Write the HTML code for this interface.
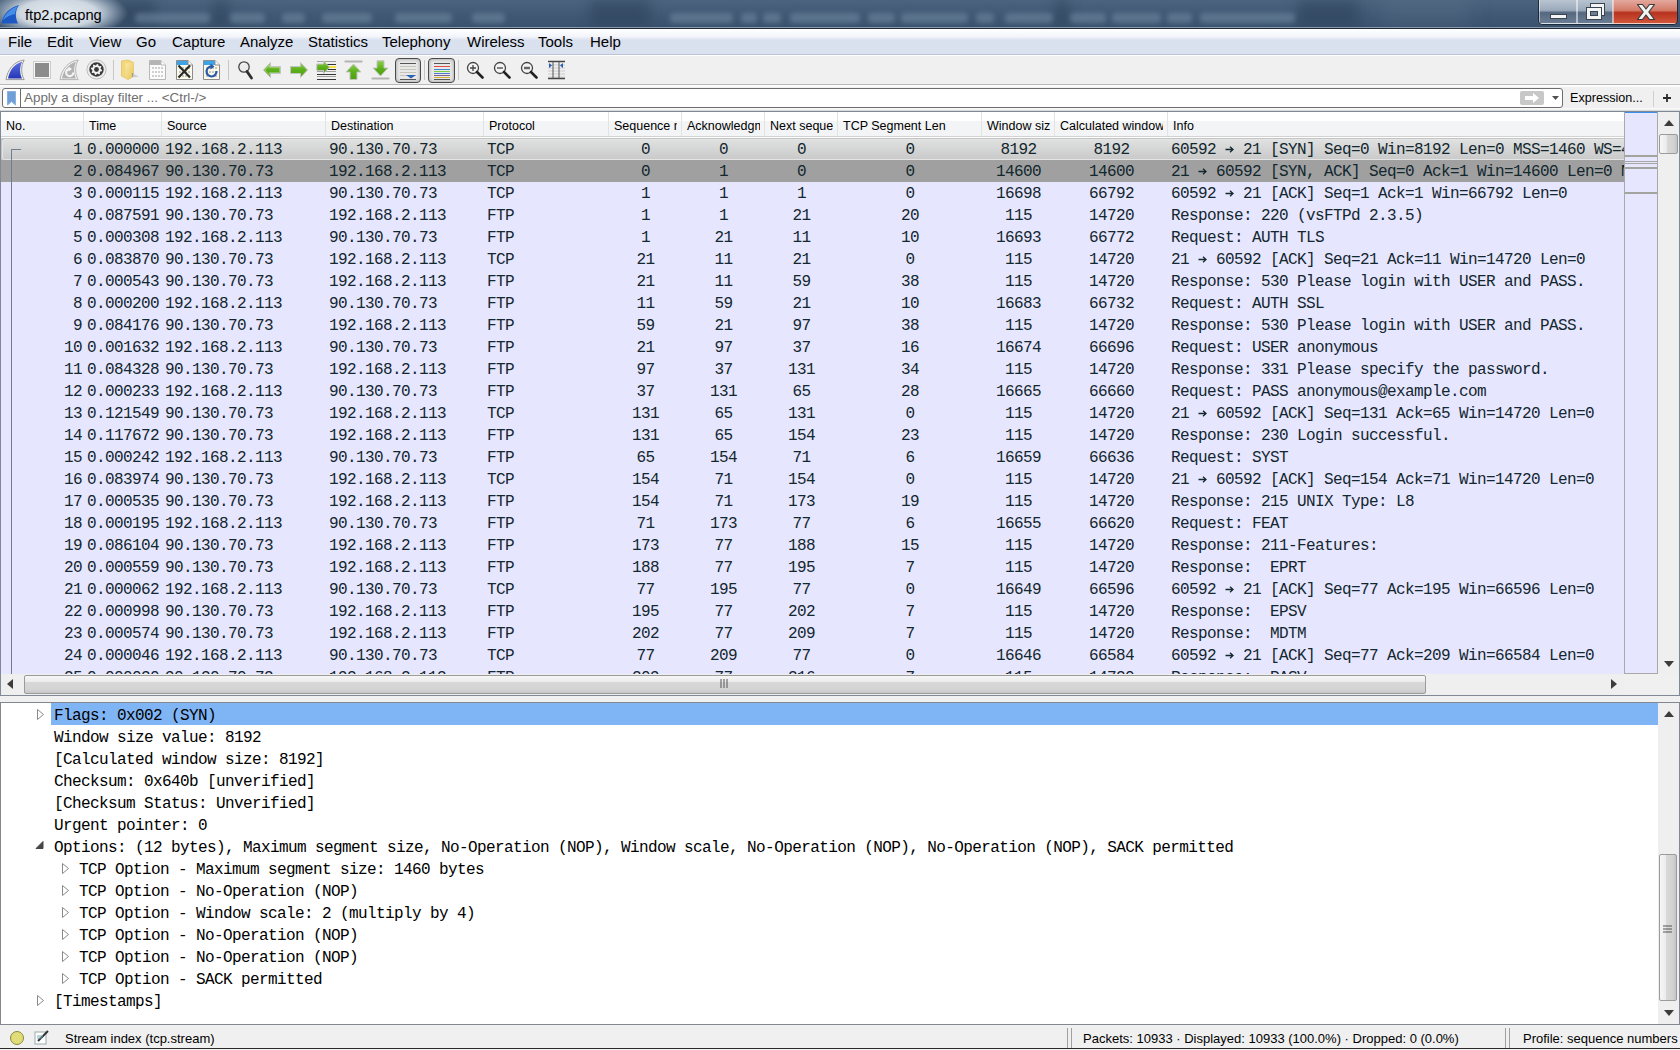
<!DOCTYPE html>
<html><head><meta charset="utf-8">
<style>
*{margin:0;padding:0;box-sizing:border-box}
html,body{width:1680px;height:1050px;overflow:hidden;background:#f0f0f0;font-family:"Liberation Sans",sans-serif;color:#000}
.abs{position:absolute}
#title{position:absolute;left:0;top:0;width:1680px;height:28px;background:linear-gradient(#4b637d 0%,#425a75 45%,#3a516c 100%);overflow:hidden}
#title::after{content:"";position:absolute;left:0;top:27px;width:1680px;height:1px;background:#8a9bb0}
#title .glow{position:absolute;left:-12px;top:-12px;width:140px;height:50px;background:radial-gradient(closest-side,rgba(232,237,242,0.97) 0%,rgba(218,226,234,0.92) 55%,rgba(170,186,202,0.5) 82%,rgba(120,140,160,0) 100%)}
#title .blur{position:absolute;top:13px;height:10px;background:rgba(120,145,170,0.5);filter:blur(2.5px);border-radius:4px}
#title .dark{position:absolute;top:0px;height:26px;background:rgba(40,60,85,0.45);filter:blur(6px)}
#title .ttl{position:absolute;left:25px;top:7px;font-size:14.7px;color:#000}
#titleline{position:absolute;left:0;top:28px;width:1680px;height:1px;background:#1f2a36}
#menubar{position:absolute;left:0;top:29px;width:1680px;height:26px;background:linear-gradient(#ffffff 0%,#f3f5fa 30%,#d9e0ee 45%,#dbe2ef 100%);border-bottom:1px solid #b9c3d5}
.mi{position:absolute;top:4px;font-size:15px;color:#000}
#toolbar{position:absolute;left:0;top:55px;width:1680px;height:30px;background:#f0f0f0;border-top:1px solid #fff;border-bottom:1px solid #b9b9b9}
#tbw{position:absolute;left:0;top:85px;width:1680px;height:2px;background:#fbfbfb}
#fbw{position:absolute;left:0;top:108px;width:1680px;height:3px;background:linear-gradient(#fafafa,#f4f4f4 50%,#c9ccd0)}
.tsep{position:absolute;top:60px;width:1px;height:20px;background:#c6c6c6}
#filterbox{position:absolute;left:2px;top:88px;width:1561px;height:20px;background:#fff;border:1px solid #6d6d6d;border-radius:3px}
#filterbox .bm{position:absolute;left:17px;top:-1px;width:1px;height:20px;background:#6d6d6d}
#filterbox .ph{position:absolute;left:21px;top:1px;font-size:13.4px;color:#6e6e6e}
#expr{position:absolute;left:1570px;top:91px;font-size:12.6px}
#plist{position:absolute;left:0;top:111px;width:1680px;height:585px;border:1px solid #7f8a96;background:#e7e6ff;overflow:hidden}
#hdr{position:absolute;left:0;top:111px;width:1624px;height:27px;background:linear-gradient(#ffffff 0%,#ffffff 40%,#f3f4f6 41%,#f3f4f6 100%);border-bottom:1px solid #d5d5d5}
.hc{position:absolute;top:0;height:24px;border-left:1px solid #e3e3e3;white-space:nowrap}
.hc div{position:absolute;left:0;top:0;bottom:0;right:4px;overflow:hidden}
.hc span{position:absolute;left:5px;top:7px;font-size:12.5px}
.hc:first-child{border-left:none}
.row{position:absolute;left:1px;width:1623px;height:22px;background:#e7e6ff}
.row.syn{background:#a0a0a0}
.row.sel{background:#c4c4c4}
.row.sel::before{content:"";position:absolute;left:1px;top:1px;right:0;bottom:0;border:1px solid #e4e4e4;border-right:none;border-radius:3px 0 0 3px;background:linear-gradient(#dfe0e0,#cacaca)}
.arw{display:inline-block;width:9px;height:22px;position:relative;vertical-align:top}
.arw svg{position:absolute;left:0;top:7px}
.cell{position:absolute;top:1px;height:22px;line-height:22px;font-family:"Liberation Mono",monospace;font-size:16px;letter-spacing:-0.6px;color:#12272e;white-space:pre;overflow:hidden;padding:0 3px}
.cell.ar{text-align:right;padding-right:2px}
.cell.ac{text-align:center;padding:0}

#bracket{position:absolute;left:11px;top:149px;width:10px;height:526px;border-left:1px solid #6f808c;border-top:1px solid #6f808c;border-top-left-radius:1px}
#minimap{position:absolute;left:1624px;top:112px;width:34px;height:562px;background:#e7e6ff;border-left:1px solid #a9a9a9;border-right:1px solid #a9a9a9;border-bottom:1px solid #a9a9a9}
#vsb1{position:absolute;left:1658px;top:112px;width:21px;height:563px;background:#efefef}
#hsb1{position:absolute;left:1px;top:674px;width:1623px;height:21px;background:#efefef}
#corner1{position:absolute;left:1624px;top:674px;width:55px;height:21px;background:#f0f0f0}
.thumbv{position:absolute;border:1px solid #9b9b9b;border-radius:2px;background:linear-gradient(90deg,#f6f6f6 0%,#ececec 38%,#d9d9d9 40%,#d2d2d2 80%,#c4c4c4 100%)}
.thumbh{position:absolute;border:1px solid #9b9b9b;border-radius:2px;background:linear-gradient(#f6f6f6 0%,#ececec 35%,#d8d8d8 38%,#d3d3d3 80%,#c6c6c6 100%)}
#details{position:absolute;left:0;top:702px;width:1680px;height:323px;background:#fff;border:1px solid #828790;overflow:hidden}
.dsel{position:absolute;left:51px;width:1607px;height:22px;background:#80b5f5}
.dt{position:absolute;height:22px;line-height:22px;margin-top:2px;font-family:"Liberation Mono",monospace;font-size:16px;letter-spacing:-0.6px;color:#000;white-space:nowrap}
.arr{position:absolute}
#vsb2{position:absolute;left:1658px;top:703px;width:21px;height:321px;background:#efefef}
#status{position:absolute;left:0;top:1025px;width:1680px;height:25px;background:#f0f0f0}
#status .t{position:absolute;top:6px;font-size:13px}
.ssep{position:absolute;top:1028px;width:5px;height:20px;border-left:1px solid #a0a0a0;border-right:1px solid #a0a0a0}
#taskbar{position:absolute;left:0;top:1048px;width:1680px;height:2px;background:#f4f4f4;border-top:1px solid #2a2a2a}
</style></head><body>
<div id="title">
  <div class="dark" style="left:115px;width:40px"></div>
  <div class="dark" style="left:213px;width:15px"></div>
  <div class="dark" style="left:590px;width:60px"></div>
  <div class="dark" style="left:1055px;width:14px"></div>
  <div class="dark" style="left:1298px;width:60px"></div>
  <div class="blur" style="left:135px;width:75px"></div>
  <div class="blur" style="left:230px;width:35px"></div>
  <div class="blur" style="left:282px;width:23px"></div>
  <div class="blur" style="left:322px;width:50px"></div>
  <div class="blur" style="left:395px;width:57px"></div>
  <div class="blur" style="left:472px;width:33px"></div>
  <div class="blur" style="left:670px;width:63px"></div>
  <div class="blur" style="left:741px;width:16px"></div>
  <div class="blur" style="left:763px;width:18px"></div>
  <div class="blur" style="left:790px;width:70px"></div>
  <div class="blur" style="left:868px;width:27px"></div>
  <div class="blur" style="left:901px;width:67px"></div>
  <div class="blur" style="left:976px;width:18px"></div>
  <div class="blur" style="left:1005px;width:48px"></div>
  <div class="blur" style="left:1070px;width:36px"></div>
  <div class="blur" style="left:1112px;width:49px"></div>
  <div class="blur" style="left:1167px;width:25px"></div>
  <div class="blur" style="left:1200px;width:95px"></div>
  <div class="abs" style="left:1380px;top:-6px;width:90px;height:36px;background:rgba(110,130,155,0.2);filter:blur(10px)"></div>
  <div class="glow"></div>
  <svg class="abs" style="left:1px;top:5px" width="18" height="19" viewBox="0 0 18 19"><path d="M0.5 18.5 C2 9 8 3 18 0 C14 6 14 12 17 18.5 Z" fill="#1d58c4"/><path d="M2 15 C4 9 9 4 17 1 C15 4 14 7 14 9 C9 10 5 12 2 15Z" fill="#4f98ec" opacity="0.85"/></svg>
  <div class="ttl">ftp2.pcapng</div>
  <!-- window buttons -->
  <div class="abs" style="left:1538px;top:0;width:140px;height:25px;border:1px solid #1e2b3a;border-top:none;border-radius:0 0 5px 5px;overflow:hidden">
    <div class="abs" style="left:0;top:0;width:38px;height:24px;background:linear-gradient(#b9c4d1 0%,#9aa9ba 45%,#56687f 55%,#6b7d94 100%);border:1px solid rgba(255,255,255,0.5);border-top:none"></div>
    <div class="abs" style="left:38px;top:0;width:36px;height:24px;background:linear-gradient(#b9c4d1 0%,#9aa9ba 45%,#56687f 55%,#6b7d94 100%);border:1px solid rgba(255,255,255,0.5);border-top:none"></div>
    <div class="abs" style="left:74px;top:0;width:65px;height:24px;background:linear-gradient(#e3a99e 0%,#d47a68 45%,#b7321f 55%,#d2553a 100%);border:1px solid rgba(255,230,220,0.6);border-top:none"></div>
    <div class="abs" style="left:11px;top:14px;width:17px;height:5px;background:#f4f4f4;border:1px solid #3a4450"></div>
    <div class="abs" style="left:51px;top:3px;width:15px;height:13px;background:#f4f4f4;border:1px solid #3a4450"></div>
    <div class="abs" style="left:47px;top:7px;width:16px;height:13px;background:#f4f4f4;border:1px solid #3a4450"></div>
    <div class="abs" style="left:51px;top:11px;width:8px;height:5px;background:#6d7e92;border:1px solid #3a4450"></div>
    <svg class="abs" style="left:97px;top:3px" width="20" height="18" viewBox="0 0 20 18"><path d="M1.5 1.5H6.5L10 6L13.5 1.5H18.5L12.8 9L18.5 16.5H13.5L10 12L6.5 16.5H1.5L7.2 9Z" fill="#f2f2f2" stroke="#3b3b3b" stroke-width="1.2" stroke-linejoin="round"/></svg>
  </div>
</div>
<div id="titleline"></div>
<div id="menubar">
  <div class="mi" style="left:8px">File</div>
  <div class="mi" style="left:47px">Edit</div>
  <div class="mi" style="left:89px">View</div>
  <div class="mi" style="left:136px">Go</div>
  <div class="mi" style="left:172px">Capture</div>
  <div class="mi" style="left:240px">Analyze</div>
  <div class="mi" style="left:308px">Statistics</div>
  <div class="mi" style="left:382px">Telephony</div>
  <div class="mi" style="left:467px">Wireless</div>
  <div class="mi" style="left:538px">Tools</div>
  <div class="mi" style="left:590px">Help</div>
</div>
<div id="toolbar"></div>
<div id="tbw"></div>
<div id="fbw"></div>
<!-- toolbar icons -->
<svg class="abs" style="left:5px;top:59px" width="21" height="22" viewBox="0 0 21 22"><path d="M1 20.6 C2.5 11 8.5 2.5 19.2 1 C16 6.5 15.6 14 19.2 20.6 Z" fill="#f4f4f4" stroke="#9a9a9a" stroke-width="1"/><defs><linearGradient id="sf1" x1="0" y1="0" x2="0" y2="1"><stop offset="0" stop-color="#5a72e0"/><stop offset="1" stop-color="#2536b8"/></linearGradient></defs><path d="M3 19.4 C4.5 11.5 9.5 4.5 17.3 2.8 C14.6 7.5 14.4 14 17 19.4 Z" fill="url(#sf1)"/></svg>
<div class="abs" style="left:33px;top:61px;width:18px;height:18px;background:#f8f8f8;border:1px solid #cdcdcd"></div><div class="abs" style="left:35px;top:63px;width:14px;height:14px;background:#8c8c8c"></div>
<svg class="abs" style="left:59px;top:59px" width="21" height="22" viewBox="0 0 21 22"><path d="M1 20.6 C2.5 11 8.5 2.5 19.2 1 C16 6.5 15.6 14 19.2 20.6 Z" fill="#f4f4f4" stroke="#b4b4b4" stroke-width="1"/><path d="M3 19.4 C4.5 11.5 9.5 4.5 17.3 2.8 C14.6 7.5 14.4 14 17 19.4 Z" fill="#b2b2b2"/><path d="M14.3 13.5 A3.6 3.6 0 1 1 10.8 10" fill="none" stroke="#f6f6f6" stroke-width="2"/><path d="M9.5 7.5 L13 10 L9.5 12.5Z" fill="#f6f6f6"/></svg>
<svg class="abs" style="left:86px;top:59px" width="21" height="21" viewBox="0 0 21 21"><circle cx="10.5" cy="10.5" r="9.6" fill="#ececec" stroke="#bdbdbd" stroke-width="1"/><circle cx="10.5" cy="10.5" r="7.2" fill="#3a3a3a"/><path d="M11.05 4.93 L12.13 5.14 L12.48 6.80 L13.16 7.25 L14.83 6.95 L15.44 7.86 L14.52 9.28 L14.68 10.09 L16.07 11.05 L15.86 12.13 L14.20 12.48 L13.75 13.16 L14.05 14.83 L13.14 15.44 L11.72 14.52 L10.91 14.68 L9.95 16.07 L8.87 15.86 L8.52 14.20 L7.84 13.75 L6.17 14.05 L5.56 13.14 L6.48 11.72 L6.32 10.91 L4.93 9.95 L5.14 8.87 L6.80 8.52 L7.25 7.84 L6.95 6.17 L7.86 5.56 L9.28 6.48 L10.09 6.32Z" fill="#f4f4f4"/><circle cx="10.5" cy="10.5" r="2.4" fill="#3a3a3a"/></svg>
<div class="tsep" style="left:113px"></div>
<svg class="abs" style="left:120px;top:59px" width="20" height="22" viewBox="0 0 20 22"><defs><linearGradient id="fo" x1="0" y1="0" x2="1" y2="1"><stop offset="0" stop-color="#fbe9a6"/><stop offset="1" stop-color="#e6c45a"/></linearGradient></defs><path d="M1.5 2 L8 1 L13.5 3.5 V17.5 L8 20.5 L1.5 17 Z" fill="#f3d77c" stroke="#e2c060" stroke-width="0.8"/><path d="M5.5 4.5 L13.5 3.5 V17.5 L8 20.5 L5.5 19 Z" fill="url(#fo)"/><path d="M14 15 L19 17.5 L14 18.5Z" fill="#cfcfcf"/><path d="M12.5 14 V18" stroke="#7aa0d0" stroke-width="1"/></svg>
<svg class="abs" style="left:148px;top:59px" width="19" height="22" viewBox="0 0 19 22"><path d="M1.5 1.5 H13 L17.5 6 V20.5 H1.5 Z" fill="#fbfbfb" stroke="#b8b8b8" stroke-width="1"/><path d="M2 2 H13 V6 H2Z" fill="#b4b4b4"/><path d="M13 1.5 V6 H17.5" fill="#fff" stroke="#b8b8b8" stroke-width="1"/><rect x="4" y="8" width="2" height="2" fill="#cfcfcf"/><rect x="7" y="8" width="2" height="2" fill="#cfcfcf"/><rect x="10" y="8" width="2" height="2" fill="#cfcfcf"/><rect x="13" y="8" width="2" height="2" fill="#cfcfcf"/><rect x="4" y="12" width="2" height="2" fill="#cfcfcf"/><rect x="7" y="12" width="2" height="2" fill="#cfcfcf"/><rect x="10" y="12" width="2" height="2" fill="#cfcfcf"/><rect x="13" y="12" width="2" height="2" fill="#cfcfcf"/><rect x="4" y="16" width="2" height="2" fill="#cfcfcf"/><rect x="7" y="16" width="2" height="2" fill="#cfcfcf"/><rect x="10" y="16" width="2" height="2" fill="#cfcfcf"/><rect x="13" y="16" width="2" height="2" fill="#cfcfcf"/></svg>
<svg class="abs" style="left:175px;top:59px" width="19" height="22" viewBox="0 0 19 22"><path d="M1.5 1.5 H13 L17.5 6 V20.5 H1.5 Z" fill="#fafaec" stroke="#8c8c8c" stroke-width="1"/><path d="M2 2 H13 V6 H2Z" fill="#3ea4e8"/><path d="M13 1.5 V6 H17.5" fill="#fff" stroke="#8c8c8c" stroke-width="1"/><rect x="4" y="8" width="2" height="2" fill="#c8c8b8"/><rect x="7" y="8" width="2" height="2" fill="#c8c8b8"/><rect x="10" y="8" width="2" height="2" fill="#c8c8b8"/><rect x="13" y="8" width="2" height="2" fill="#c8c8b8"/><rect x="4" y="12" width="2" height="2" fill="#c8c8b8"/><rect x="7" y="12" width="2" height="2" fill="#c8c8b8"/><rect x="10" y="12" width="2" height="2" fill="#c8c8b8"/><rect x="13" y="12" width="2" height="2" fill="#c8c8b8"/><rect x="4" y="16" width="2" height="2" fill="#c8c8b8"/><rect x="7" y="16" width="2" height="2" fill="#c8c8b8"/><rect x="10" y="16" width="2" height="2" fill="#c8c8b8"/><rect x="13" y="16" width="2" height="2" fill="#c8c8b8"/><path d="M3.5 6.5 L15 18.5 M15 6.5 L3.5 18.5" stroke="#2a2a2a" stroke-width="2.2"/></svg>
<svg class="abs" style="left:202px;top:59px" width="19" height="22" viewBox="0 0 19 22"><path d="M1.5 1.5 H13 L17.5 6 V20.5 H1.5 Z" fill="#fafaec" stroke="#8c8c8c" stroke-width="1"/><path d="M2 2 H13 V6 H2Z" fill="#3ea4e8"/><path d="M13 1.5 V6 H17.5" fill="#fff" stroke="#8c8c8c" stroke-width="1"/><rect x="4" y="8" width="2" height="2" fill="#c8c8b8"/><rect x="7" y="8" width="2" height="2" fill="#c8c8b8"/><rect x="10" y="8" width="2" height="2" fill="#c8c8b8"/><rect x="13" y="8" width="2" height="2" fill="#c8c8b8"/><rect x="4" y="12" width="2" height="2" fill="#c8c8b8"/><rect x="7" y="12" width="2" height="2" fill="#c8c8b8"/><rect x="10" y="12" width="2" height="2" fill="#c8c8b8"/><rect x="13" y="12" width="2" height="2" fill="#c8c8b8"/><rect x="4" y="16" width="2" height="2" fill="#c8c8b8"/><rect x="7" y="16" width="2" height="2" fill="#c8c8b8"/><rect x="10" y="16" width="2" height="2" fill="#c8c8b8"/><rect x="13" y="16" width="2" height="2" fill="#c8c8b8"/><path d="M14.5 12 A5 5 0 1 1 10 7.5" fill="none" stroke="#2a58a8" stroke-width="2.2"/><path d="M8.5 4.5 L12.5 7.5 L8.5 10.5Z" fill="#2a58a8"/></svg>
<div class="tsep" style="left:228px"></div>
<svg class="abs" style="left:237px;top:60px" width="18" height="20" viewBox="0 0 18 20"><circle cx="7" cy="7" r="5.2" fill="#ececec" stroke="#444" stroke-width="1.3"/><path d="M4.5 4.5 A3 3 0 0 1 7 3.5" stroke="#fff" stroke-width="1" fill="none"/><path d="M10 11.5 L14.5 18" stroke="#2e2e2e" stroke-width="2.8" stroke-linecap="round"/></svg>
<svg class="abs" style="left:262px;top:61px" width="20" height="18" viewBox="0 0 20 18"><defs><linearGradient id="gA" x1="0" y1="0" x2="0" y2="1"><stop offset="0" stop-color="#8fd050"/><stop offset="0.5" stop-color="#5cb01a"/><stop offset="1" stop-color="#4ea010"/></linearGradient></defs><path d="M1.5 9 L8.5 1.5 V5.5 H18.5 V12.5 H8.5 V16.5 Z" fill="url(#gA)" stroke="#c4c4c4" stroke-width="1" stroke-linejoin="round"/><path d="M3 9 L7.5 4 V6.5 H17.5 V11.5 H7.5 V14 Z" fill="none" stroke="#fff" stroke-opacity="0.5" stroke-width="0.6"/></svg>
<svg class="abs" style="left:289px;top:61px" width="20" height="18" viewBox="0 0 20 18"><path d="M18.5 9 L11.5 1.5 V5.5 H1.5 V12.5 H11.5 V16.5 Z" fill="url(#gA)" stroke="#c4c4c4" stroke-width="1" stroke-linejoin="round"/></svg>
<svg class="abs" style="left:316px;top:60px" width="21" height="21" viewBox="0 0 21 21"><path d="M1 1.5H20M1 11.5H20M1 16.5H20" stroke="#a0a0a0" stroke-width="1"/><path d="M1 4.5H20M1 9.5H20M1 14.5H20M1 19.5H20" stroke="#333" stroke-width="1"/><rect x="13" y="6" width="7" height="2" fill="#f5e040"/><path d="M0.8 10.5 V4 H7.5 V0.8 L13.5 7.2 L7.5 13.6 V10.5 Z" fill="url(#gA)" stroke="#c4c4c4" stroke-width="1" stroke-linejoin="round"/></svg>
<svg class="abs" style="left:344px;top:60px" width="19" height="21" viewBox="0 0 19 21"><path d="M1.5 1.5H17.5" stroke="#b4b4b4" stroke-width="2.2" stroke-linecap="round"/><path d="M9.5 4 L17 12 H13 V19.5 H6 V12 H2 Z" fill="url(#gA)" stroke="#c4c4c4" stroke-width="1" stroke-linejoin="round"/></svg>
<svg class="abs" style="left:371px;top:60px" width="19" height="21" viewBox="0 0 19 21"><path d="M1.5 18.5H17.5" stroke="#b4b4b4" stroke-width="2.2" stroke-linecap="round"/><path d="M9.5 16 L17 8 H13 V0.8 H6 V8 H2 Z" fill="url(#gA)" stroke="#c4c4c4" stroke-width="1" stroke-linejoin="round"/></svg>
<div class="abs" style="left:395px;top:58px;width:26px;height:25px;border:1px solid #4a4a4a;border-radius:4px;background:#e8e8e8;box-shadow:inset 0 0 3px 1px rgba(0,0,0,0.22)"></div>
<svg class="abs" style="left:398px;top:61px" width="20" height="20" viewBox="0 0 20 20"><path d="M2 5.5H18M2 8.5H18M2 11.5H18M2 14.5H18" stroke="#c4c4b8" stroke-width="1"/><path d="M2 2.5H18M2 18.5H18" stroke="#555" stroke-width="1"/><path d="M8 14 H18 L13 17.5Z" fill="#2a62b8"/></svg>
<div class="tsep" style="left:424px"></div>
<div class="abs" style="left:428px;top:58px;width:27px;height:25px;border:1px solid #4a4a4a;border-radius:4px;background:#e8e8e8;box-shadow:inset 0 0 3px 1px rgba(0,0,0,0.22)"></div>
<svg class="abs" style="left:432px;top:61px" width="20" height="20" viewBox="0 0 20 20"><path d="M2 2.5H18" stroke="#555" stroke-width="1"/><path d="M2 5.5H18" stroke="#e04848" stroke-width="1"/><path d="M2 8.5H18" stroke="#4a80d0" stroke-width="1"/><path d="M2 10.5H18" stroke="#74d040" stroke-width="1"/><path d="M2 12.5H18" stroke="#4a80d0" stroke-width="1"/><path d="M2 14.5H18" stroke="#806090" stroke-width="1"/><path d="M2 16.5H18" stroke="#d8b030" stroke-width="1"/><path d="M2 18.5H18" stroke="#555" stroke-width="1"/></svg>
<div class="tsep" style="left:458px"></div>
<svg class="abs" style="left:466px;top:61px" width="18" height="18" viewBox="0 0 18 18"><circle cx="7" cy="7" r="5.5" fill="#f4f4f4" stroke="#444" stroke-width="1.3"/><path d="M4 7H10M7 4V10" stroke="#444" stroke-width="1.3"/><path d="M11 11 L16.5 16.5" stroke="#222" stroke-width="2.6" stroke-linecap="round"/></svg>
<svg class="abs" style="left:493px;top:61px" width="18" height="18" viewBox="0 0 18 18"><circle cx="7" cy="7" r="5.5" fill="#f4f4f4" stroke="#444" stroke-width="1.3"/><path d="M4 7H10" stroke="#444" stroke-width="1.3"/><path d="M11 11 L16.5 16.5" stroke="#222" stroke-width="2.6" stroke-linecap="round"/></svg>
<svg class="abs" style="left:520px;top:61px" width="18" height="18" viewBox="0 0 18 18"><circle cx="7" cy="7" r="5.5" fill="#f4f4f4" stroke="#444" stroke-width="1.3"/><path d="M4 7H10" stroke="#666" stroke-width="2.5"/><path d="M11 11 L16.5 16.5" stroke="#222" stroke-width="2.6" stroke-linecap="round"/></svg>
<svg class="abs" style="left:547px;top:60px" width="19" height="20" viewBox="0 0 19 20"><path d="M1 5H18M1 8H18M1 11H18M1 14H18M1 17H18" stroke="#ccc" stroke-width="1"/><path d="M1 1.5H18M1 18.5H18" stroke="#444" stroke-width="1.4"/><path d="M6 1.5V18.5M12 1.5V18.5" stroke="#555" stroke-width="1"/><path d="M2 3 L5 5.5 L2 8Z M16 3 L13 5.5 L16 8Z" fill="#2860b8"/></svg>

<div id="filterbox"><div class="bm"></div>
  <svg class="abs" style="left:4px;top:2px" width="9" height="15" viewBox="0 0 9 15"><path d="M0.5 0.5H8.5V14L4.5 10.5L0.5 14Z" fill="#6f9fd6" stroke="#86b1e0" stroke-width="1"/></svg>
  <div class="ph">Apply a display filter ... &lt;Ctrl-/&gt;</div>
  <div class="abs" style="left:1517px;top:2px;width:24px;height:14px;background:#c8c8c8;border-radius:2px"></div>
  <svg class="abs" style="left:1521px;top:4px" width="16" height="10" viewBox="0 0 16 10"><path d="M1 3 H9 V0 L15 5 L9 10 V7 H1 Z" fill="#fff"/></svg>
  <svg class="abs" style="left:1549px;top:7px" width="8" height="5" viewBox="0 0 8 5"><path d="M0 0 H7 L3.5 4 Z" fill="#505050"/></svg>
</div>
<div id="expr">Expression...</div>
<div class="abs" style="left:1653px;top:91px;width:1px;height:16px;background:#d0d0d0"></div>
<svg class="abs" style="left:1663px;top:94px" width="8" height="8" viewBox="0 0 8 8"><path d="M4 0V8M0 4H8" stroke="#2a2a2a" stroke-width="1.8"/></svg>

<div id="plist"></div>
<div class="row sel" style="top:138px"><div class="cell ar" style="left:1px;width:82px">1</div><div class="cell al" style="left:83px;width:78px">0.000000</div><div class="cell al" style="left:161px;width:164px">192.168.2.113</div><div class="cell al" style="left:325px;width:158px">90.130.70.73</div><div class="cell al" style="left:483px;width:125px">TCP</div><div class="cell ac" style="left:608px;width:73px">0</div><div class="cell ac" style="left:681px;width:83px">0</div><div class="cell ac" style="left:764px;width:73px">0</div><div class="cell ac" style="left:837px;width:144px">0</div><div class="cell ac" style="left:981px;width:73px">8192</div><div class="cell ac" style="left:1054px;width:113px">8192</div><div class="cell al" style="left:1167px;width:457px">60592 <span class="arw"><svg width="9" height="7" viewBox="0 0 9 7"><path d="M0.5 3.5H8M5 0.8L8 3.5L5 6.2" fill="none" stroke="#12272e" stroke-width="1.3"/></svg></span> 21 [SYN] Seq=0 Win=8192 Len=0 MSS=1460 WS=4 SACK_PERM=1</div></div>
<div class="row syn" style="top:160px"><div class="cell ar" style="left:1px;width:82px">2</div><div class="cell al" style="left:83px;width:78px">0.084967</div><div class="cell al" style="left:161px;width:164px">90.130.70.73</div><div class="cell al" style="left:325px;width:158px">192.168.2.113</div><div class="cell al" style="left:483px;width:125px">TCP</div><div class="cell ac" style="left:608px;width:73px">0</div><div class="cell ac" style="left:681px;width:83px">1</div><div class="cell ac" style="left:764px;width:73px">0</div><div class="cell ac" style="left:837px;width:144px">0</div><div class="cell ac" style="left:981px;width:73px">14600</div><div class="cell ac" style="left:1054px;width:113px">14600</div><div class="cell al" style="left:1167px;width:457px">21 <span class="arw"><svg width="9" height="7" viewBox="0 0 9 7"><path d="M0.5 3.5H8M5 0.8L8 3.5L5 6.2" fill="none" stroke="#12272e" stroke-width="1.3"/></svg></span> 60592 [SYN, ACK] Seq=0 Ack=1 Win=14600 Len=0 MSS=1460</div></div>
<div class="row" style="top:182px"><div class="cell ar" style="left:1px;width:82px">3</div><div class="cell al" style="left:83px;width:78px">0.000115</div><div class="cell al" style="left:161px;width:164px">192.168.2.113</div><div class="cell al" style="left:325px;width:158px">90.130.70.73</div><div class="cell al" style="left:483px;width:125px">TCP</div><div class="cell ac" style="left:608px;width:73px">1</div><div class="cell ac" style="left:681px;width:83px">1</div><div class="cell ac" style="left:764px;width:73px">1</div><div class="cell ac" style="left:837px;width:144px">0</div><div class="cell ac" style="left:981px;width:73px">16698</div><div class="cell ac" style="left:1054px;width:113px">66792</div><div class="cell al" style="left:1167px;width:457px">60592 <span class="arw"><svg width="9" height="7" viewBox="0 0 9 7"><path d="M0.5 3.5H8M5 0.8L8 3.5L5 6.2" fill="none" stroke="#12272e" stroke-width="1.3"/></svg></span> 21 [ACK] Seq=1 Ack=1 Win=66792 Len=0</div></div>
<div class="row" style="top:204px"><div class="cell ar" style="left:1px;width:82px">4</div><div class="cell al" style="left:83px;width:78px">0.087591</div><div class="cell al" style="left:161px;width:164px">90.130.70.73</div><div class="cell al" style="left:325px;width:158px">192.168.2.113</div><div class="cell al" style="left:483px;width:125px">FTP</div><div class="cell ac" style="left:608px;width:73px">1</div><div class="cell ac" style="left:681px;width:83px">1</div><div class="cell ac" style="left:764px;width:73px">21</div><div class="cell ac" style="left:837px;width:144px">20</div><div class="cell ac" style="left:981px;width:73px">115</div><div class="cell ac" style="left:1054px;width:113px">14720</div><div class="cell al" style="left:1167px;width:457px">Response: 220 (vsFTPd 2.3.5)</div></div>
<div class="row" style="top:226px"><div class="cell ar" style="left:1px;width:82px">5</div><div class="cell al" style="left:83px;width:78px">0.000308</div><div class="cell al" style="left:161px;width:164px">192.168.2.113</div><div class="cell al" style="left:325px;width:158px">90.130.70.73</div><div class="cell al" style="left:483px;width:125px">FTP</div><div class="cell ac" style="left:608px;width:73px">1</div><div class="cell ac" style="left:681px;width:83px">21</div><div class="cell ac" style="left:764px;width:73px">11</div><div class="cell ac" style="left:837px;width:144px">10</div><div class="cell ac" style="left:981px;width:73px">16693</div><div class="cell ac" style="left:1054px;width:113px">66772</div><div class="cell al" style="left:1167px;width:457px">Request: AUTH TLS</div></div>
<div class="row" style="top:248px"><div class="cell ar" style="left:1px;width:82px">6</div><div class="cell al" style="left:83px;width:78px">0.083870</div><div class="cell al" style="left:161px;width:164px">90.130.70.73</div><div class="cell al" style="left:325px;width:158px">192.168.2.113</div><div class="cell al" style="left:483px;width:125px">TCP</div><div class="cell ac" style="left:608px;width:73px">21</div><div class="cell ac" style="left:681px;width:83px">11</div><div class="cell ac" style="left:764px;width:73px">21</div><div class="cell ac" style="left:837px;width:144px">0</div><div class="cell ac" style="left:981px;width:73px">115</div><div class="cell ac" style="left:1054px;width:113px">14720</div><div class="cell al" style="left:1167px;width:457px">21 <span class="arw"><svg width="9" height="7" viewBox="0 0 9 7"><path d="M0.5 3.5H8M5 0.8L8 3.5L5 6.2" fill="none" stroke="#12272e" stroke-width="1.3"/></svg></span> 60592 [ACK] Seq=21 Ack=11 Win=14720 Len=0</div></div>
<div class="row" style="top:270px"><div class="cell ar" style="left:1px;width:82px">7</div><div class="cell al" style="left:83px;width:78px">0.000543</div><div class="cell al" style="left:161px;width:164px">90.130.70.73</div><div class="cell al" style="left:325px;width:158px">192.168.2.113</div><div class="cell al" style="left:483px;width:125px">FTP</div><div class="cell ac" style="left:608px;width:73px">21</div><div class="cell ac" style="left:681px;width:83px">11</div><div class="cell ac" style="left:764px;width:73px">59</div><div class="cell ac" style="left:837px;width:144px">38</div><div class="cell ac" style="left:981px;width:73px">115</div><div class="cell ac" style="left:1054px;width:113px">14720</div><div class="cell al" style="left:1167px;width:457px">Response: 530 Please login with USER and PASS.</div></div>
<div class="row" style="top:292px"><div class="cell ar" style="left:1px;width:82px">8</div><div class="cell al" style="left:83px;width:78px">0.000200</div><div class="cell al" style="left:161px;width:164px">192.168.2.113</div><div class="cell al" style="left:325px;width:158px">90.130.70.73</div><div class="cell al" style="left:483px;width:125px">FTP</div><div class="cell ac" style="left:608px;width:73px">11</div><div class="cell ac" style="left:681px;width:83px">59</div><div class="cell ac" style="left:764px;width:73px">21</div><div class="cell ac" style="left:837px;width:144px">10</div><div class="cell ac" style="left:981px;width:73px">16683</div><div class="cell ac" style="left:1054px;width:113px">66732</div><div class="cell al" style="left:1167px;width:457px">Request: AUTH SSL</div></div>
<div class="row" style="top:314px"><div class="cell ar" style="left:1px;width:82px">9</div><div class="cell al" style="left:83px;width:78px">0.084176</div><div class="cell al" style="left:161px;width:164px">90.130.70.73</div><div class="cell al" style="left:325px;width:158px">192.168.2.113</div><div class="cell al" style="left:483px;width:125px">FTP</div><div class="cell ac" style="left:608px;width:73px">59</div><div class="cell ac" style="left:681px;width:83px">21</div><div class="cell ac" style="left:764px;width:73px">97</div><div class="cell ac" style="left:837px;width:144px">38</div><div class="cell ac" style="left:981px;width:73px">115</div><div class="cell ac" style="left:1054px;width:113px">14720</div><div class="cell al" style="left:1167px;width:457px">Response: 530 Please login with USER and PASS.</div></div>
<div class="row" style="top:336px"><div class="cell ar" style="left:1px;width:82px">10</div><div class="cell al" style="left:83px;width:78px">0.001632</div><div class="cell al" style="left:161px;width:164px">192.168.2.113</div><div class="cell al" style="left:325px;width:158px">90.130.70.73</div><div class="cell al" style="left:483px;width:125px">FTP</div><div class="cell ac" style="left:608px;width:73px">21</div><div class="cell ac" style="left:681px;width:83px">97</div><div class="cell ac" style="left:764px;width:73px">37</div><div class="cell ac" style="left:837px;width:144px">16</div><div class="cell ac" style="left:981px;width:73px">16674</div><div class="cell ac" style="left:1054px;width:113px">66696</div><div class="cell al" style="left:1167px;width:457px">Request: USER anonymous</div></div>
<div class="row" style="top:358px"><div class="cell ar" style="left:1px;width:82px">11</div><div class="cell al" style="left:83px;width:78px">0.084328</div><div class="cell al" style="left:161px;width:164px">90.130.70.73</div><div class="cell al" style="left:325px;width:158px">192.168.2.113</div><div class="cell al" style="left:483px;width:125px">FTP</div><div class="cell ac" style="left:608px;width:73px">97</div><div class="cell ac" style="left:681px;width:83px">37</div><div class="cell ac" style="left:764px;width:73px">131</div><div class="cell ac" style="left:837px;width:144px">34</div><div class="cell ac" style="left:981px;width:73px">115</div><div class="cell ac" style="left:1054px;width:113px">14720</div><div class="cell al" style="left:1167px;width:457px">Response: 331 Please specify the password.</div></div>
<div class="row" style="top:380px"><div class="cell ar" style="left:1px;width:82px">12</div><div class="cell al" style="left:83px;width:78px">0.000233</div><div class="cell al" style="left:161px;width:164px">192.168.2.113</div><div class="cell al" style="left:325px;width:158px">90.130.70.73</div><div class="cell al" style="left:483px;width:125px">FTP</div><div class="cell ac" style="left:608px;width:73px">37</div><div class="cell ac" style="left:681px;width:83px">131</div><div class="cell ac" style="left:764px;width:73px">65</div><div class="cell ac" style="left:837px;width:144px">28</div><div class="cell ac" style="left:981px;width:73px">16665</div><div class="cell ac" style="left:1054px;width:113px">66660</div><div class="cell al" style="left:1167px;width:457px">Request: PASS anonymous@example.com</div></div>
<div class="row" style="top:402px"><div class="cell ar" style="left:1px;width:82px">13</div><div class="cell al" style="left:83px;width:78px">0.121549</div><div class="cell al" style="left:161px;width:164px">90.130.70.73</div><div class="cell al" style="left:325px;width:158px">192.168.2.113</div><div class="cell al" style="left:483px;width:125px">TCP</div><div class="cell ac" style="left:608px;width:73px">131</div><div class="cell ac" style="left:681px;width:83px">65</div><div class="cell ac" style="left:764px;width:73px">131</div><div class="cell ac" style="left:837px;width:144px">0</div><div class="cell ac" style="left:981px;width:73px">115</div><div class="cell ac" style="left:1054px;width:113px">14720</div><div class="cell al" style="left:1167px;width:457px">21 <span class="arw"><svg width="9" height="7" viewBox="0 0 9 7"><path d="M0.5 3.5H8M5 0.8L8 3.5L5 6.2" fill="none" stroke="#12272e" stroke-width="1.3"/></svg></span> 60592 [ACK] Seq=131 Ack=65 Win=14720 Len=0</div></div>
<div class="row" style="top:424px"><div class="cell ar" style="left:1px;width:82px">14</div><div class="cell al" style="left:83px;width:78px">0.117672</div><div class="cell al" style="left:161px;width:164px">90.130.70.73</div><div class="cell al" style="left:325px;width:158px">192.168.2.113</div><div class="cell al" style="left:483px;width:125px">FTP</div><div class="cell ac" style="left:608px;width:73px">131</div><div class="cell ac" style="left:681px;width:83px">65</div><div class="cell ac" style="left:764px;width:73px">154</div><div class="cell ac" style="left:837px;width:144px">23</div><div class="cell ac" style="left:981px;width:73px">115</div><div class="cell ac" style="left:1054px;width:113px">14720</div><div class="cell al" style="left:1167px;width:457px">Response: 230 Login successful.</div></div>
<div class="row" style="top:446px"><div class="cell ar" style="left:1px;width:82px">15</div><div class="cell al" style="left:83px;width:78px">0.000242</div><div class="cell al" style="left:161px;width:164px">192.168.2.113</div><div class="cell al" style="left:325px;width:158px">90.130.70.73</div><div class="cell al" style="left:483px;width:125px">FTP</div><div class="cell ac" style="left:608px;width:73px">65</div><div class="cell ac" style="left:681px;width:83px">154</div><div class="cell ac" style="left:764px;width:73px">71</div><div class="cell ac" style="left:837px;width:144px">6</div><div class="cell ac" style="left:981px;width:73px">16659</div><div class="cell ac" style="left:1054px;width:113px">66636</div><div class="cell al" style="left:1167px;width:457px">Request: SYST</div></div>
<div class="row" style="top:468px"><div class="cell ar" style="left:1px;width:82px">16</div><div class="cell al" style="left:83px;width:78px">0.083974</div><div class="cell al" style="left:161px;width:164px">90.130.70.73</div><div class="cell al" style="left:325px;width:158px">192.168.2.113</div><div class="cell al" style="left:483px;width:125px">TCP</div><div class="cell ac" style="left:608px;width:73px">154</div><div class="cell ac" style="left:681px;width:83px">71</div><div class="cell ac" style="left:764px;width:73px">154</div><div class="cell ac" style="left:837px;width:144px">0</div><div class="cell ac" style="left:981px;width:73px">115</div><div class="cell ac" style="left:1054px;width:113px">14720</div><div class="cell al" style="left:1167px;width:457px">21 <span class="arw"><svg width="9" height="7" viewBox="0 0 9 7"><path d="M0.5 3.5H8M5 0.8L8 3.5L5 6.2" fill="none" stroke="#12272e" stroke-width="1.3"/></svg></span> 60592 [ACK] Seq=154 Ack=71 Win=14720 Len=0</div></div>
<div class="row" style="top:490px"><div class="cell ar" style="left:1px;width:82px">17</div><div class="cell al" style="left:83px;width:78px">0.000535</div><div class="cell al" style="left:161px;width:164px">90.130.70.73</div><div class="cell al" style="left:325px;width:158px">192.168.2.113</div><div class="cell al" style="left:483px;width:125px">FTP</div><div class="cell ac" style="left:608px;width:73px">154</div><div class="cell ac" style="left:681px;width:83px">71</div><div class="cell ac" style="left:764px;width:73px">173</div><div class="cell ac" style="left:837px;width:144px">19</div><div class="cell ac" style="left:981px;width:73px">115</div><div class="cell ac" style="left:1054px;width:113px">14720</div><div class="cell al" style="left:1167px;width:457px">Response: 215 UNIX Type: L8</div></div>
<div class="row" style="top:512px"><div class="cell ar" style="left:1px;width:82px">18</div><div class="cell al" style="left:83px;width:78px">0.000195</div><div class="cell al" style="left:161px;width:164px">192.168.2.113</div><div class="cell al" style="left:325px;width:158px">90.130.70.73</div><div class="cell al" style="left:483px;width:125px">FTP</div><div class="cell ac" style="left:608px;width:73px">71</div><div class="cell ac" style="left:681px;width:83px">173</div><div class="cell ac" style="left:764px;width:73px">77</div><div class="cell ac" style="left:837px;width:144px">6</div><div class="cell ac" style="left:981px;width:73px">16655</div><div class="cell ac" style="left:1054px;width:113px">66620</div><div class="cell al" style="left:1167px;width:457px">Request: FEAT</div></div>
<div class="row" style="top:534px"><div class="cell ar" style="left:1px;width:82px">19</div><div class="cell al" style="left:83px;width:78px">0.086104</div><div class="cell al" style="left:161px;width:164px">90.130.70.73</div><div class="cell al" style="left:325px;width:158px">192.168.2.113</div><div class="cell al" style="left:483px;width:125px">FTP</div><div class="cell ac" style="left:608px;width:73px">173</div><div class="cell ac" style="left:681px;width:83px">77</div><div class="cell ac" style="left:764px;width:73px">188</div><div class="cell ac" style="left:837px;width:144px">15</div><div class="cell ac" style="left:981px;width:73px">115</div><div class="cell ac" style="left:1054px;width:113px">14720</div><div class="cell al" style="left:1167px;width:457px">Response: 211-Features:</div></div>
<div class="row" style="top:556px"><div class="cell ar" style="left:1px;width:82px">20</div><div class="cell al" style="left:83px;width:78px">0.000559</div><div class="cell al" style="left:161px;width:164px">90.130.70.73</div><div class="cell al" style="left:325px;width:158px">192.168.2.113</div><div class="cell al" style="left:483px;width:125px">FTP</div><div class="cell ac" style="left:608px;width:73px">188</div><div class="cell ac" style="left:681px;width:83px">77</div><div class="cell ac" style="left:764px;width:73px">195</div><div class="cell ac" style="left:837px;width:144px">7</div><div class="cell ac" style="left:981px;width:73px">115</div><div class="cell ac" style="left:1054px;width:113px">14720</div><div class="cell al" style="left:1167px;width:457px">Response:  EPRT</div></div>
<div class="row" style="top:578px"><div class="cell ar" style="left:1px;width:82px">21</div><div class="cell al" style="left:83px;width:78px">0.000062</div><div class="cell al" style="left:161px;width:164px">192.168.2.113</div><div class="cell al" style="left:325px;width:158px">90.130.70.73</div><div class="cell al" style="left:483px;width:125px">TCP</div><div class="cell ac" style="left:608px;width:73px">77</div><div class="cell ac" style="left:681px;width:83px">195</div><div class="cell ac" style="left:764px;width:73px">77</div><div class="cell ac" style="left:837px;width:144px">0</div><div class="cell ac" style="left:981px;width:73px">16649</div><div class="cell ac" style="left:1054px;width:113px">66596</div><div class="cell al" style="left:1167px;width:457px">60592 <span class="arw"><svg width="9" height="7" viewBox="0 0 9 7"><path d="M0.5 3.5H8M5 0.8L8 3.5L5 6.2" fill="none" stroke="#12272e" stroke-width="1.3"/></svg></span> 21 [ACK] Seq=77 Ack=195 Win=66596 Len=0</div></div>
<div class="row" style="top:600px"><div class="cell ar" style="left:1px;width:82px">22</div><div class="cell al" style="left:83px;width:78px">0.000998</div><div class="cell al" style="left:161px;width:164px">90.130.70.73</div><div class="cell al" style="left:325px;width:158px">192.168.2.113</div><div class="cell al" style="left:483px;width:125px">FTP</div><div class="cell ac" style="left:608px;width:73px">195</div><div class="cell ac" style="left:681px;width:83px">77</div><div class="cell ac" style="left:764px;width:73px">202</div><div class="cell ac" style="left:837px;width:144px">7</div><div class="cell ac" style="left:981px;width:73px">115</div><div class="cell ac" style="left:1054px;width:113px">14720</div><div class="cell al" style="left:1167px;width:457px">Response:  EPSV</div></div>
<div class="row" style="top:622px"><div class="cell ar" style="left:1px;width:82px">23</div><div class="cell al" style="left:83px;width:78px">0.000574</div><div class="cell al" style="left:161px;width:164px">90.130.70.73</div><div class="cell al" style="left:325px;width:158px">192.168.2.113</div><div class="cell al" style="left:483px;width:125px">FTP</div><div class="cell ac" style="left:608px;width:73px">202</div><div class="cell ac" style="left:681px;width:83px">77</div><div class="cell ac" style="left:764px;width:73px">209</div><div class="cell ac" style="left:837px;width:144px">7</div><div class="cell ac" style="left:981px;width:73px">115</div><div class="cell ac" style="left:1054px;width:113px">14720</div><div class="cell al" style="left:1167px;width:457px">Response:  MDTM</div></div>
<div class="row" style="top:644px"><div class="cell ar" style="left:1px;width:82px">24</div><div class="cell al" style="left:83px;width:78px">0.000046</div><div class="cell al" style="left:161px;width:164px">192.168.2.113</div><div class="cell al" style="left:325px;width:158px">90.130.70.73</div><div class="cell al" style="left:483px;width:125px">TCP</div><div class="cell ac" style="left:608px;width:73px">77</div><div class="cell ac" style="left:681px;width:83px">209</div><div class="cell ac" style="left:764px;width:73px">77</div><div class="cell ac" style="left:837px;width:144px">0</div><div class="cell ac" style="left:981px;width:73px">16646</div><div class="cell ac" style="left:1054px;width:113px">66584</div><div class="cell al" style="left:1167px;width:457px">60592 <span class="arw"><svg width="9" height="7" viewBox="0 0 9 7"><path d="M0.5 3.5H8M5 0.8L8 3.5L5 6.2" fill="none" stroke="#12272e" stroke-width="1.3"/></svg></span> 21 [ACK] Seq=77 Ack=209 Win=66584 Len=0</div></div>
<div class="row" style="top:666px"><div class="cell ar" style="left:1px;width:82px">25</div><div class="cell al" style="left:83px;width:78px">0.000030</div><div class="cell al" style="left:161px;width:164px">90.130.70.73</div><div class="cell al" style="left:325px;width:158px">192.168.2.113</div><div class="cell al" style="left:483px;width:125px">FTP</div><div class="cell ac" style="left:608px;width:73px">209</div><div class="cell ac" style="left:681px;width:83px">77</div><div class="cell ac" style="left:764px;width:73px">216</div><div class="cell ac" style="left:837px;width:144px">7</div><div class="cell ac" style="left:981px;width:73px">115</div><div class="cell ac" style="left:1054px;width:113px">14720</div><div class="cell al" style="left:1167px;width:457px">Response:  PASV</div></div>
<div id="bracket"></div>
<div class="abs" style="left:1px;top:137px;width:1623px;height:1px;background:#fff"></div>
<div id="hdrcover" class="abs" style="left:1px;top:112px;width:1623px;height:25px;background:linear-gradient(#ffffff 0%,#ffffff 36%,#f3f4f6 36%,#f3f4f6 100%);border-bottom:1px solid #d2d2d2">
<div class="hc" style="left:0px;width:82px"><div><span>No.</span></div></div>
<div class="hc" style="left:82px;width:78px"><div><span>Time</span></div></div>
<div class="hc" style="left:160px;width:164px"><div><span>Source</span></div></div>
<div class="hc" style="left:324px;width:158px"><div><span>Destination</span></div></div>
<div class="hc" style="left:482px;width:125px"><div><span>Protocol</span></div></div>
<div class="hc" style="left:607px;width:73px"><div><span>Sequence number</span></div></div>
<div class="hc" style="left:680px;width:83px"><div><span>Acknowledgment</span></div></div>
<div class="hc" style="left:763px;width:73px"><div><span>Next sequence</span></div></div>
<div class="hc" style="left:836px;width:144px"><div><span>TCP Segment Len</span></div></div>
<div class="hc" style="left:980px;width:73px"><div><span>Window size value</span></div></div>
<div class="hc" style="left:1053px;width:113px"><div><span>Calculated window size</span></div></div>
<div class="hc" style="left:1166px;width:457px"><div><span>Info</span></div></div>
</div>
<div id="minimap">
  <div class="abs" style="left:0;top:0;width:32px;height:1px;background:#3c8ee8"></div>
  <div class="abs" style="left:0;top:43px;width:32px;height:2px;background:#a4a49e"></div>
  <div class="abs" style="left:0;top:49px;width:32px;height:1px;background:#a6a6a6"></div>
  <div class="abs" style="left:0;top:51px;width:32px;height:1px;background:#a6a6a6"></div>
  <div class="abs" style="left:0;top:55px;width:32px;height:2px;background:#a4a49e"></div>
  <div class="abs" style="left:0;top:80px;width:32px;height:2px;background:#a4a49e"></div>
</div>
<div id="vsb1">
  <svg class="abs" style="left:6px;top:8px" width="10" height="6" viewBox="0 0 10 6"><path d="M0 6 L5 0 L10 6 Z" fill="#3c3c3c"/></svg>
  <div class="thumbv" style="left:1px;top:22px;width:19px;height:20px"></div>
  <svg class="abs" style="left:6px;top:549px" width="10" height="6" viewBox="0 0 10 6"><path d="M0 0 L10 0 L5 6 Z" fill="#3c3c3c"/></svg>
</div>
<div id="hsb1">
  <svg class="abs" style="left:6px;top:5px" width="6" height="10" viewBox="0 0 6 10"><path d="M6 0 L0 5 L6 10 Z" fill="#3c3c3c"/></svg>
  <div class="thumbh" style="left:23px;top:1px;width:1402px;height:19px"></div>
  <svg class="abs" style="left:719px;top:5px" width="8" height="9" viewBox="0 0 8 9"><path d="M1 0V9M4 0V9M7 0V9" stroke="#555" stroke-width="1"/></svg>
  <svg class="abs" style="left:1610px;top:5px" width="6" height="10" viewBox="0 0 6 10"><path d="M0 0 L6 5 L0 10 Z" fill="#3c3c3c"/></svg>
</div>
<div id="corner1"></div>

<div id="details">
</div>
<div class="dsel" style="top:703px"></div><svg class="arr" style="left:37px;top:709px" width="8" height="11" viewBox="0 0 8 11"><path d="M0.5 0.5 L6.5 5.5 L0.5 10.5 Z" fill="none" stroke="#8a8a8a" stroke-width="1"/></svg><div class="dt" style="left:54px;top:703px">Flags: 0x002 (SYN)</div>
<div class="dt" style="left:54px;top:725px">Window size value: 8192</div>
<div class="dt" style="left:54px;top:747px">[Calculated window size: 8192]</div>
<div class="dt" style="left:54px;top:769px">Checksum: 0x640b [unverified]</div>
<div class="dt" style="left:54px;top:791px">[Checksum Status: Unverified]</div>
<div class="dt" style="left:54px;top:813px">Urgent pointer: 0</div>
<svg class="arr" style="left:35px;top:840px" width="10" height="10" viewBox="0 0 10 10"><path d="M1 8.5 L8 8.5 L8 1.5 Z" fill="#464646" stroke="#464646" stroke-width="1" stroke-linejoin="round"/></svg><div class="dt" style="left:54px;top:835px">Options: (12 bytes), Maximum segment size, No-Operation (NOP), Window scale, No-Operation (NOP), No-Operation (NOP), SACK permitted</div>
<svg class="arr" style="left:62px;top:863px" width="8" height="11" viewBox="0 0 8 11"><path d="M0.5 0.5 L6.5 5.5 L0.5 10.5 Z" fill="none" stroke="#8a8a8a" stroke-width="1"/></svg><div class="dt" style="left:79px;top:857px">TCP Option - Maximum segment size: 1460 bytes</div>
<svg class="arr" style="left:62px;top:885px" width="8" height="11" viewBox="0 0 8 11"><path d="M0.5 0.5 L6.5 5.5 L0.5 10.5 Z" fill="none" stroke="#8a8a8a" stroke-width="1"/></svg><div class="dt" style="left:79px;top:879px">TCP Option - No-Operation (NOP)</div>
<svg class="arr" style="left:62px;top:907px" width="8" height="11" viewBox="0 0 8 11"><path d="M0.5 0.5 L6.5 5.5 L0.5 10.5 Z" fill="none" stroke="#8a8a8a" stroke-width="1"/></svg><div class="dt" style="left:79px;top:901px">TCP Option - Window scale: 2 (multiply by 4)</div>
<svg class="arr" style="left:62px;top:929px" width="8" height="11" viewBox="0 0 8 11"><path d="M0.5 0.5 L6.5 5.5 L0.5 10.5 Z" fill="none" stroke="#8a8a8a" stroke-width="1"/></svg><div class="dt" style="left:79px;top:923px">TCP Option - No-Operation (NOP)</div>
<svg class="arr" style="left:62px;top:951px" width="8" height="11" viewBox="0 0 8 11"><path d="M0.5 0.5 L6.5 5.5 L0.5 10.5 Z" fill="none" stroke="#8a8a8a" stroke-width="1"/></svg><div class="dt" style="left:79px;top:945px">TCP Option - No-Operation (NOP)</div>
<svg class="arr" style="left:62px;top:973px" width="8" height="11" viewBox="0 0 8 11"><path d="M0.5 0.5 L6.5 5.5 L0.5 10.5 Z" fill="none" stroke="#8a8a8a" stroke-width="1"/></svg><div class="dt" style="left:79px;top:967px">TCP Option - SACK permitted</div>
<svg class="arr" style="left:37px;top:995px" width="8" height="11" viewBox="0 0 8 11"><path d="M0.5 0.5 L6.5 5.5 L0.5 10.5 Z" fill="none" stroke="#8a8a8a" stroke-width="1"/></svg><div class="dt" style="left:54px;top:989px">[Timestamps]</div>
<div id="vsb2">
  <svg class="abs" style="left:6px;top:8px" width="10" height="6" viewBox="0 0 10 6"><path d="M0 6 L5 0 L10 6 Z" fill="#3c3c3c"/></svg>
  <div class="thumbv" style="left:1px;top:151px;width:18px;height:147px"></div>
  <svg class="abs" style="left:5px;top:222px" width="9" height="9" viewBox="0 0 9 9"><path d="M0 1H9M0 4H9M0 7H9" stroke="#555" stroke-width="1.2"/></svg>
  <svg class="abs" style="left:6px;top:307px" width="10" height="6" viewBox="0 0 10 6"><path d="M0 0 L10 0 L5 6 Z" fill="#3c3c3c"/></svg>
</div>

<div id="status">
  <svg class="abs" style="left:9px;top:5px" width="16" height="16" viewBox="0 0 16 16"><circle cx="8" cy="8" r="6.5" fill="#e0dc78" stroke="#8c8840" stroke-width="1"/></svg>
  <svg class="abs" style="left:34px;top:4px" width="16" height="16" viewBox="0 0 16 16"><rect x="1" y="3" width="11" height="12" fill="#fff" stroke="#9aa" stroke-width="1"/><path d="M4 12 L14 2" stroke="#333" stroke-width="2"/><path d="M3 7H9M3 9H8" stroke="#7ab" stroke-width="1"/></svg>
  <div class="t" style="left:65px">Stream index (tcp.stream)</div>
  <div class="t" style="left:1083px">Packets: 10933 · Displayed: 10933 (100.0%) · Dropped: 0 (0.0%)</div>
  <div class="t" style="left:1523px">Profile: sequence numbers</div>
</div>
<div class="ssep" style="left:1067px"></div>
<div class="ssep" style="left:1505px"></div>
<div id="taskbar"></div>
</body></html>
